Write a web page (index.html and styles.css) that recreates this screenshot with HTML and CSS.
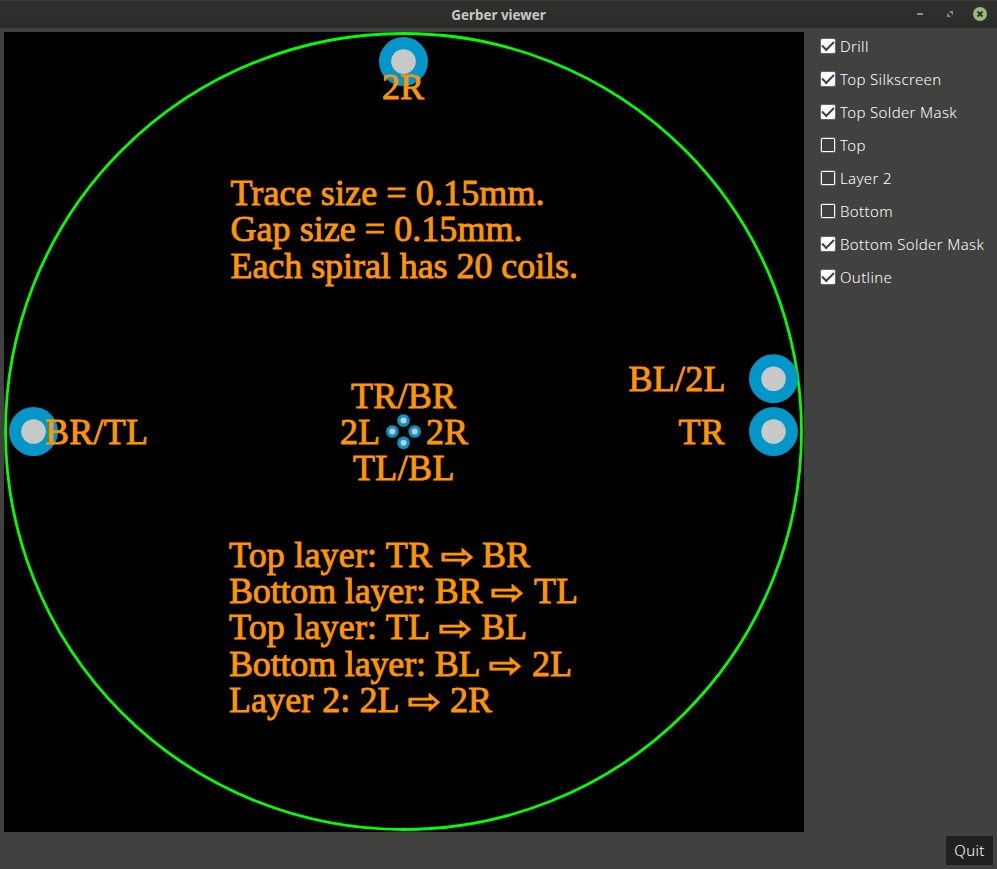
FILE: index.html
```html
<!DOCTYPE html>
<html lang="en">
<head>
<meta charset="utf-8">
<title>Gerber viewer</title>
<link rel="stylesheet" href="styles.css">
</head>
<body>
<header class="titlebar">
  <h1 class="title">Gerber viewer</h1>
  <svg class="controls" width="80" height="28" viewBox="0 0 80 28">
    <path class="dim" d="M0 13h6v2H0z"/>
    <path class="dim" d="M32 11h4v4zM30 13v4h4z"/>
    <circle class="close" cx="63" cy="14" r="7"/>
    <path class="cross" d="M60.500 11.500l5 5M65.500 11.500l-5 5"/>
  </svg>
</header>
<main class="workspace">
  <svg class="board" width="800" height="800" viewBox="4 32 800 800">
    <circle class="outline" cx="403.500" cy="431.500" r="398"/>
    <g class="pads">
      <circle cx="403.500" cy="61.500" r="24.500"/>
      <circle cx="33.500" cy="431.500" r="24.500"/>
      <circle cx="773.500" cy="378.700" r="24.500"/>
      <circle cx="773.500" cy="431.500" r="24.500"/>
      <circle cx="403.500" cy="420.500" r="6.300"/>
      <circle cx="392.300" cy="431.500" r="6.300"/>
      <circle cx="414.700" cy="431.500" r="6.300"/>
      <circle cx="403.500" cy="442.700" r="6.300"/>
    </g>
    <g class="holes">
      <circle cx="403.500" cy="61.500" r="12.300"/>
      <circle cx="33.500" cy="431.500" r="12.300"/>
      <circle cx="773.500" cy="378.700" r="12.300"/>
      <circle cx="773.500" cy="431.500" r="12.300"/>
      <circle cx="403.500" cy="420.500" r="3"/>
      <circle cx="392.300" cy="431.500" r="3"/>
      <circle cx="414.700" cy="431.500" r="3"/>
      <circle cx="403.500" cy="442.700" r="3"/>
    </g>
    <g class="silk">
      <text x="382" y="98.500">2R</text>
      <text x="230.500" y="204.700" textLength="314">Trace size = 0.15mm.</text>
      <text x="230.500" y="241" textLength="292">Gap size = 0.15mm.</text>
      <text x="230.500" y="277.500" textLength="347.500">Each spiral has 20 coils.</text>
      <text x="45" y="443.500" textLength="103">BR/TL</text>
      <text x="351" y="407.500" textLength="105">TR/BR</text>
      <text x="340" y="443.500">2L</text>
      <text x="426" y="443.500">2R</text>
      <text x="353" y="479.700" textLength="101.500">TL/BL</text>
      <text x="628.500" y="390.700" textLength="97">BL/2L</text>
      <text x="678.500" y="443.500">TR</text>
      <text x="229" y="566.500" textLength="203">Top layer: TR</text>
      <text class="arrow" transform="translate(440.500 567.500) scale(1 .85)">⇨</text>
      <text x="482" y="566.500">BR</text>
      <text x="229" y="602.700" textLength="253.500">Bottom layer: BR</text>
      <text class="arrow" transform="translate(490.500 603.800) scale(1 .85)">⇨</text>
      <text x="534" y="602.700">TL</text>
      <text x="229" y="639.200" textLength="201">Top layer: TL</text>
      <text class="arrow" transform="translate(438.500 640) scale(1 .85)">⇨</text>
      <text x="481" y="639.200">BL</text>
      <text x="229" y="675.500" textLength="251.500">Bottom layer: BL</text>
      <text class="arrow" transform="translate(488.500 676.500) scale(1 .85)">⇨</text>
      <text x="532" y="675.500">2L</text>
      <text x="229" y="711.700" textLength="170.500">Layer 2: 2L</text>
      <text class="arrow" transform="translate(407.500 712.800) scale(1 .85)">⇨</text>
      <text x="450" y="711.700">2R</text>
    </g>
  </svg>
  <aside class="layers">
    <label class="layer"><input type="checkbox" checked>Drill</label>
    <label class="layer"><input type="checkbox" checked>Top Silkscreen</label>
    <label class="layer"><input type="checkbox" checked>Top Solder Mask</label>
    <label class="layer"><input type="checkbox">Top</label>
    <label class="layer"><input type="checkbox">Layer 2</label>
    <label class="layer"><input type="checkbox">Bottom</label>
    <label class="layer"><input type="checkbox" checked>Bottom Solder Mask</label>
    <label class="layer"><input type="checkbox" checked>Outline</label>
  </aside>
</main>
<footer class="actions"><button class="quit">Quit</button></footer>
</body>
</html>
```
FILE: styles.css
```css
* { box-sizing: border-box; }
body {
  margin: 0;
  height: 869px;
  overflow: hidden;
  background: #41413f;
  color: #fff;
  font-family: "Noto Sans", "Open Sans", sans-serif;
}
.titlebar {
  display: grid;
  grid-template-columns: 80px 1fr 80px;
  height: 28px;
  background: linear-gradient(#30302e, #2b2b29);
  border-top: 1px solid #393937;
}
.title {
  grid-column: 2;
  margin: 0;
  text-align: center;
  font-size: 13.4px;
  line-height: 28px;
  font-weight: 700;
  color: #c8c8c4;
}
.controls { margin-top: -1px; }
.dim { fill: #8b8b88; }
.close { fill: #9ab87c; }
.cross { stroke: #30302e; stroke-width: 2; fill: none; }
.workspace { display: flex; padding: 4px 0 0 4px; }
.board { display: block; flex: none; background: #000; }
.outline { fill: none; stroke: #0f0; stroke-width: 2.8; }
.pads { fill: #0396c8; }
.holes { fill: #c8cac8; }
.silk {
  fill: #ff9500;
  stroke: #ff9500;
  stroke-width: 0.9;
  font-family: "Liberation Serif", serif;
  font-size: 36px;
}
.arrow {
  font-family: "DejaVu Sans", sans-serif;
  font-size: 40px;
  stroke-width: 1.3;
}
.layers { padding: 0 0 0 17px; margin-top: -3px; }
.layer {
  display: flex;
  align-items: center;
  gap: 5px;
  height: 33px;
  font-size: 15px;
  font-weight: 300;
  letter-spacing: 0.35px;
  white-space: nowrap;
}
.layer input {
  appearance: none;
  width: 14px;
  height: 14px;
  margin: 0;
  border: 1px solid #fff;
  border-radius: 1px;
  box-shadow: 0 0 0 1px rgb(255 255 255 / 20%);
  display: grid;
  place-items: center;
}
.layer input:checked { background: #fff; }
.layer input:checked::after {
  content: "";
  width: 10px;
  height: 5px;
  border: solid #41413f;
  border-width: 0 0 2px 2px;
  transform: translateY(-1px) rotate(-45deg);
}
.actions { display: flex; justify-content: flex-end; padding: 4px 4px 0 0; }
.quit {
  width: 47px;
  height: 29px;
  padding: 0 0 2px;
  border: 0;
  background: #20201e;
  color: #fff;
  font: 300 15px "Noto Sans", "Open Sans", sans-serif;
  letter-spacing: 0.35px;
}
```
